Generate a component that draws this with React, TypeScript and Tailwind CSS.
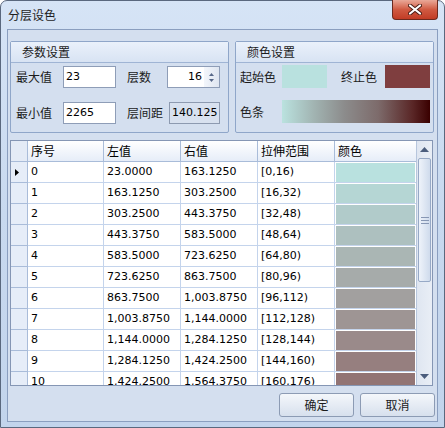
import type { ReactNode } from "react";

const cjk = "font-['Noto_Sans_CJK_SC',sans-serif]";
const num = "font-['DejaVu_Sans','Noto_Sans_CJK_SC',sans-serif] text-[11px]";

const START = [185, 225, 223];
const END = [127, 62, 63];

function classColor(i: number, n = 16) {
  const t = i / (n - 1);
  const c = START.map((s, k) => Math.round(s + (END[k] - s) * t));
  return `rgb(${c[0]}, ${c[1]}, ${c[2]})`;
}

const rows: [string, string, string, string][] = [
  ["0", "23.0000", "163.1250", "[0,16)"],
  ["1", "163.1250", "303.2500", "[16,32)"],
  ["2", "303.2500", "443.3750", "[32,48)"],
  ["3", "443.3750", "583.5000", "[48,64)"],
  ["4", "583.5000", "723.6250", "[64,80)"],
  ["5", "723.6250", "863.7500", "[80,96)"],
  ["6", "863.7500", "1,003.8750", "[96,112)"],
  ["7", "1,003.8750", "1,144.0000", "[112,128)"],
  ["8", "1,144.0000", "1,284.1250", "[128,144)"],
  ["9", "1,284.1250", "1,424.2500", "[144,160)"],
  ["10", "1,424.2500", "1,564.3750", "[160,176)"],
];

const cols = "grid grid-cols-[17px_76px_77px_77px_77px_81px]";

function GroupBox({ title, className, children }: { title: string; className: string; children: ReactNode }) {
  return (
    <div className={`flex flex-col rounded-[2px] border border-[#8fa6c9] ${className}`}>
      <div className="flex h-[21px] items-center border-b border-[#9fb4d4] bg-gradient-to-b from-[#eaf1fb] to-[#d8e3f3] pl-[11px]">
        <span className={`${cjk} text-[12px] leading-none text-[#1b1b1b]`}>{title}</span>
      </div>
      {children}
    </div>
  );
}

function Label({ text, w }: { text: string; w: string }) {
  return <span className={`${cjk} ${w} shrink-0 text-[12px] leading-none text-[#1b1b1b]`}>{text}</span>;
}

function Arrow({ down }: { down?: boolean }) {
  return (
    <svg width="9" height="5" viewBox="0 0 9 5">
      <path d={down ? "M0 0H9L4.5 5Z" : "M0 5H9L4.5 0Z"} fill="#4b5d7d" />
    </svg>
  );
}

export default function App() {
  return (
    <div className="h-[428px] w-[445px] overflow-hidden bg-white">
      <div className="flex h-full flex-col rounded-t-[7px] border border-[#5a687e] bg-gradient-to-b from-[#d6e4f6] via-[#c8d9ef] to-[#c2d4ec]">
        <div className="flex h-[28px] shrink-0 items-start justify-between">
          <span className={`${cjk} pl-[7px] pt-[7px] text-[12px] leading-[14px] text-[#1e1e1e]`}>分层设色</span>
          <div className="-mt-[1px] mr-[6px] flex h-[20px] w-[46px] items-center justify-center rounded-b-[4px] border border-t-0 border-[#6b2a1f] bg-gradient-to-b from-[#e9a898] via-[#d05a42] to-[#c23c25]">
            <svg width="14" height="11" viewBox="0 0 14 11">
              <path d="M2 1.5L12 9.5M12 1.5L2 9.5" stroke="#4a1d15" strokeWidth="4" strokeLinecap="round" />
              <path d="M2 1.5L12 9.5M12 1.5L2 9.5" stroke="#ffffff" strokeWidth="2.2" strokeLinecap="round" />
            </svg>
          </div>
        </div>

        <div className="mx-[6px] mb-[5px] flex flex-1 flex-col border border-[#8a9ebf] bg-[#d4dfef] pl-[2px] pr-[1px] pt-[11px]">
          <div className="flex gap-[6px]">
            <GroupBox title="参数设置" className="h-[92px] w-[219px]">
              <div className="flex flex-col gap-[14px] pl-[5px] pt-[3px]">
                <div className="flex h-[22px] items-center">
                  <Label text="最大值" w="w-[47px]" />
                  <div className={`${num} flex h-[22px] w-[53px] items-center border border-[#8e9db7] bg-white pl-[2px] text-black`}>23</div>
                  <span className="w-[11px]" />
                  <Label text="层数" w="w-[40px]" />
                  <div className="flex h-[22px] w-[53px] border border-[#8e9db7] bg-white">
                    <div className={`${num} flex flex-1 items-center justify-end pr-[2px] text-black`}>16</div>
                    <div className="flex w-[15px] flex-col items-center justify-center gap-[3px] bg-gradient-to-r from-[#f3f6fb] to-[#dfe6f1]">
                      <svg width="5" height="3" viewBox="0 0 5 3"><path d="M0 3H5L2.5 0Z" fill="#58698a" /></svg>
                      <svg width="5" height="3" viewBox="0 0 5 3"><path d="M0 0H5L2.5 3Z" fill="#58698a" /></svg>
                    </div>
                  </div>
                </div>
                <div className="flex h-[22px] items-center">
                  <Label text="最小值" w="w-[47px]" />
                  <div className={`${num} flex h-[22px] w-[53px] items-center border border-[#8e9db7] bg-white pl-[2px] text-black`}>2265</div>
                  <span className="w-[11px]" />
                  <Label text="层间距" w="w-[42px]" />
                  <div className={`${num} flex h-[22px] w-[51px] items-center border border-[#8d9ab0] bg-[#d8e1ef] pl-[2px] text-black`}>140.125</div>
                </div>
              </div>
            </GroupBox>

            <GroupBox title="颜色设置" className="h-[92px] w-[199px]">
              <div className="flex flex-col gap-[12px] pl-[4px] pt-[2px]">
                <div className="flex h-[23px] items-center">
                  <Label text="起始色" w="w-[42px]" />
                  <div className="h-[23px] w-[45px] bg-[#b9e1df]" />
                  <span className="w-[14px]" />
                  <Label text="终止色" w="w-[44px]" />
                  <div className="h-[23px] w-[45px] bg-[#7f3e3f]" />
                </div>
                <div className="flex h-[23px] items-center">
                  <Label text="色条" w="w-[42px]" />
                  <div className="h-[23px] w-[148px] bg-[linear-gradient(to_right,#bae2df,#a1b3b1_22%,#8c8c8c_42%,#7d6b6b_65%,#5a2727_88%,#3a0000)]" />
                </div>
              </div>
            </GroupBox>
          </div>

          <div className="mt-[7px] flex h-[246px] w-[423px] overflow-hidden border border-[#8596b4] bg-white">
            <div className="w-[405px] overflow-hidden">
              <div className={`${cols} h-[21px]`}>
                <div className="border-b border-r border-[#a9bcd9] bg-[#e4ebf6]" />
                {["序号", "左值", "右值", "拉伸范围", "颜色"].map((h, i) => (
                  <div
                    key={h}
                    className={`${cjk} flex items-center border-b border-[#a9bcd9] bg-gradient-to-b from-[#ffffff] to-[#e6edf8] pl-[3px] text-[12px] leading-none text-black ${i < 4 ? "border-r" : ""}`}
                  >
                    {h}
                  </div>
                ))}
              </div>
              {rows.map((r, i) => (
                <div key={r[0]} className={`${cols} h-[21px]`}>
                  <div className="flex items-center border-b border-r border-[#a9bcd9] bg-[#e6edf8] pl-[4px]">
                    {i === 0 ? (
                      <svg width="4" height="7" viewBox="0 0 4 7"><path d="M0 0L4 3.5L0 7Z" fill="#000" /></svg>
                    ) : null}
                  </div>
                  {r.map((v, k) => (
                    <div key={k} className={`${num} flex items-center border-b border-r border-[#c4d4ec] pl-[3px] text-black`}>
                      {v}
                    </div>
                  ))}
                  <div className="border-b border-[#c4d4ec] bg-white pl-[1px] pt-[1px]">
                    <div className="h-[19px] w-[79px]" style={{ backgroundColor: classColor(i) }} />
                  </div>
                </div>
              ))}
            </div>
            <div className="flex w-[16px] flex-col border-l border-[#b7c6dd] bg-gradient-to-r from-[#dfe6f1] to-[#e9eef6]">
              <div className="flex h-[17px] items-center justify-center">
                <Arrow />
              </div>
              <div className="mx-[1px] flex h-[124px] items-center justify-center rounded-[2px] border border-[#97a9c6] bg-gradient-to-r from-[#eef3fa] to-[#cfdbec]">
                <div className="flex flex-col gap-[2px]">
                  <div className="h-[1px] w-[8px] bg-[#8797b4]" />
                  <div className="h-[1px] w-[8px] bg-[#8797b4]" />
                  <div className="h-[1px] w-[8px] bg-[#8797b4]" />
                </div>
              </div>
              <div className="flex-1" />
              <div className="flex h-[17px] items-center justify-center">
                <Arrow down />
              </div>
            </div>
          </div>

          <div className="mt-[7px] flex w-[425px] justify-end gap-[6px]">
            {["确定", "取消"].map((b) => (
              <div
                key={b}
                className={`${cjk} flex h-[24px] w-[75px] items-center justify-center rounded-[3px] border border-[#8c9bb4] bg-gradient-to-b from-[#f4f7fb] to-[#d7e0ed] text-[12px] leading-none text-[#1b1b1b]`}
              >
                {b}
              </div>
            ))}
          </div>
        </div>
      </div>
    </div>
  );
}
